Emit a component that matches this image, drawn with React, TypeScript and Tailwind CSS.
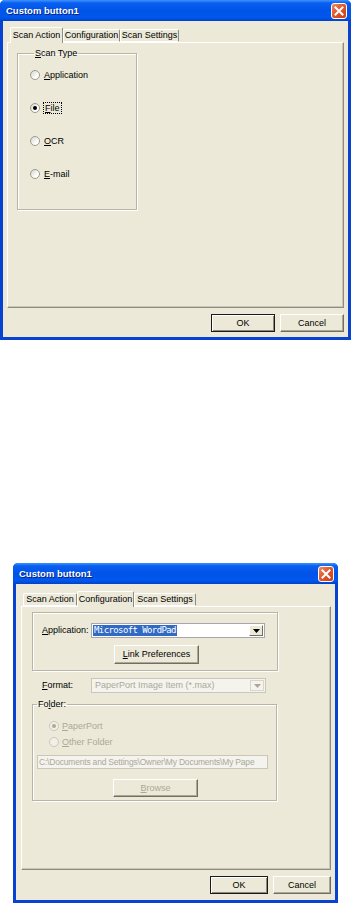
import React from 'react';

// underlined accelerator letter
const K = ({ children }: { children: React.ReactNode }) => <span className="underline underline-offset-[1px]">{children}</span>;

const CloseBox = () => (
  <div className="w-[16px] h-[16px] rounded-[3px] border border-white bg-[linear-gradient(135deg,#ee8a64_0%,#e2582c_45%,#c9411a_100%)] flex items-center justify-center">
    <svg width="10" height="10" viewBox="0 0 10 10">
      <path d="M1.5 1.5 L8.5 8.5 M8.5 1.5 L1.5 8.5" stroke="#fff" strokeWidth="2" strokeLinecap="square" />
    </svg>
  </div>
);

const TitleBar = ({ title }: { title: string }) => (
  <div className="h-[21px] shrink-0 flex items-center justify-between pl-[6px] pr-[4px] bg-[linear-gradient(180deg,#3d95ff_0%,#0a5ff0_14%,#0053e6_50%,#0058ee_82%,#0042c8_100%)]">
    <span className="text-white font-bold text-[9.5px] leading-none [text-shadow:1px_1px_0_#0a1f80]">{title}</span>
    <CloseBox />
  </div>
);

const Tab = ({ label, w, active }: { label: string; w: string; active?: boolean }) => (
  <div
    className={`${w} flex items-center justify-center rounded-t-[2px] border-t border-l border-r border-t-white border-l-white border-r-[#8e8c80] bg-[#ece9d8] ${
      active ? 'h-[16px] relative z-10 -mb-px' : 'h-[13px] border-b border-b-white'
    }`}
  >
    {label}
  </div>
);

const Radio = ({ checked, disabled }: { checked?: boolean; disabled?: boolean }) => (
  <span
    className={`w-[10px] h-[10px] rounded-full border flex items-center justify-center shrink-0 ${
      disabled ? 'border-[#cac8bb] bg-[#f2f0e6]' : 'border-[#9c9a90] bg-[linear-gradient(135deg,#d6d4ca_0%,#ffffff_70%)]'
    }`}
  >
    {checked && <span className={`w-[4px] h-[4px] rounded-full ${disabled ? 'bg-[#aca899]' : 'bg-black'}`} />}
  </span>
);

const Btn = ({ children, w, h, def, disabled }: { children: React.ReactNode; w: string; h: string; def?: boolean; disabled?: boolean }) => (
  <div
    className={`${w} ${h} flex items-center justify-center bg-[#ece9d8] ${
      def
        ? 'border border-[#1a1a1a] shadow-[inset_1px_1px_0_#fff,inset_-1px_-1px_0_#8a887c]'
        : 'border border-t-white border-l-white border-r-[#716f64] border-b-[#716f64] shadow-[inset_-1px_-1px_0_#aca899]'
    } ${disabled ? 'text-[#aca899]' : 'text-black'}`}
  >
    {children}
  </div>
);

const Window = ({ title, w, children }: { title: string; w: string; children: React.ReactNode }) => (
  <div className={`${w} h-[340px] flex flex-col rounded-t-[5px] overflow-hidden bg-[#0842d2]`}>
    <TitleBar title={title} />
    <div className="flex-1 mx-[3px] mb-[3px] bg-[#ece9d8] flex flex-col">{children}</div>
  </div>
);

const panelCls =
  'flex flex-col border border-t-white border-l-white border-r-[#8e8c80] border-b-[#8e8c80] shadow-[inset_-1px_-1px_0_#c9c6b6]';

const groupCls = 'border border-[#b8b5a6] shadow-[1px_1px_0_#fff,inset_1px_1px_0_#fff]';

const Arrow = ({ color }: { color: string }) => (
  <svg width="7" height="4" viewBox="0 0 7 4">
    <path d="M0 0h7L3.5 4z" fill={color} />
  </svg>
);

const Footer = ({ bw }: { bw: string }) => (
  <div className="flex justify-end gap-[5px] mt-[6px]">
    <Btn w={bw} h="h-[18px]" def>OK</Btn>
    <Btn w={bw} h="h-[18px]">Cancel</Btn>
  </div>
);

const ScanActionDialog = () => (
  <Window title="Custom button1" w="w-[351px]">
    <div className="flex-1 flex flex-col px-[4px] pt-[6px] pb-[5px]">
      <div className="flex items-end pl-[3px] h-[15px]">
        <Tab label="Scan Action" w="w-[53px]" active />
        <Tab label="Configuration" w="w-[57px]" />
        <Tab label="Scan Settings" w="w-[59px]" />
      </div>
      <div className={`${panelCls} h-[266px]`}>
        <fieldset className={`${groupCls} ml-[9px] mt-[5px] w-[120px] h-[162px] pl-[12px] pt-[10px] flex flex-col gap-[21px]`}>
          <legend className="ml-[4px] px-[1px] leading-[11px]">
            <K>S</K>can Type
          </legend>
          <div className="flex items-center gap-[4px] h-[12px]">
            <Radio />
            <span><K>A</K>pplication</span>
          </div>
          <div className="flex items-center gap-[3px] h-[12px]">
            <Radio checked />
            <span className="border border-dotted border-black px-px leading-[10px]"><K>F</K>ile</span>
          </div>
          <div className="flex items-center gap-[4px] h-[12px]">
            <Radio />
            <span><K>O</K>CR</span>
          </div>
          <div className="flex items-center gap-[4px] h-[12px]">
            <Radio />
            <span><K>E</K>-mail</span>
          </div>
        </fieldset>
      </div>
      <Footer bw="w-[64px]" />
    </div>
  </Window>
);

const ConfigurationDialog = () => (
  <Window title="Custom button1" w="w-[325px]">
    <div className="flex-1 flex flex-col pl-[5px] pr-[4px] pt-[8px] pb-[5px]">
      <div className="flex items-end pl-[2px] h-[14px]">
        <Tab label="Scan Action" w="w-[54px]" />
        <Tab label="Configuration" w="w-[57px]" active />
        <Tab label="Scan Settings" w="w-[62px]" />
      </div>
      <div className={`${panelCls} h-[264px]`}>
        {/* application box */}
        <div className={`${groupCls} ml-[10px] mt-[5px] w-[246px] h-[59px] pl-[9px] pt-[10px] flex flex-col`}>
          <div className="flex items-center h-[15px]">
            <span className="w-[49px]">
              <K>A</K>pplication:
            </span>
            <div className="w-[174px] h-[15px] bg-white border border-[#a7a6aa] flex items-center p-px">
              <span className="h-full flex-1 flex items-center">
                <span className="bg-[#316ac5] text-white h-full flex items-center px-px font-['DejaVu_Sans_Mono',monospace] text-[9px] tracking-[-0.6px]">
                  Microsoft WordPad
                </span>
              </span>
              <span className="w-[14px] h-full bg-[#ece9d8] border border-t-white border-l-white border-r-[#716f64] border-b-[#716f64] flex items-center justify-center">
                <Arrow color="#000" />
              </span>
            </div>
          </div>
          <div className="mt-[7px] ml-[72px]">
            <Btn w="w-[85px]" h="h-[19px]"><span><K>L</K>ink Preferences</span></Btn>
          </div>
        </div>

        {/* format */}
        <div className="flex items-center ml-[20px] mt-[7px] h-[15px]">
          <span className="w-[49px]">
            <K>F</K>ormat:
          </span>
          <div className="w-[175px] h-[15px] bg-[#f4f3ee] border border-[#c9c7ba] flex items-center p-px text-[#aca899]">
            <span className="flex-1 pl-[2px] whitespace-nowrap">PaperPort Image Item (*.max)</span>
            <span className="w-[14px] h-full bg-[#f4f3ee] border border-[#d8d6c8] flex items-center justify-center">
              <Arrow color="#aca899" />
            </span>
          </div>
        </div>

        {/* folder */}
        <fieldset className={`${groupCls} ml-[10px] mt-[6px] w-[245px] h-[102px] flex flex-col`}>
          <legend className="ml-[4px] px-[1px] leading-[11px]">
            Fo<K>l</K>der:
          </legend>
          <div className="flex items-center gap-[3px] h-[12px] ml-[16px] mt-[10px] text-[#aca899]">
            <Radio checked disabled />
            <span><K>P</K>aperPort</span>
          </div>
          <div className="flex items-center gap-[3px] h-[12px] ml-[16px] mt-[4px] text-[#aca899]">
            <Radio disabled />
            <span><K>O</K>ther Folder</span>
          </div>
          <div className="ml-[4px] mt-[7px] w-[231px] h-[14px] bg-[#f4f3ee] border border-[#c9c7ba] text-[#aca899] flex items-center pl-[1px] whitespace-nowrap text-[8.5px] tracking-[-0.2px]">
            C:\Documents and Settings\Owner\My Documents\My Pape
          </div>
          <div className="ml-[80px] mt-[10px]">
            <Btn w="w-[85px]" h="h-[18px]" disabled><span><K>B</K>rowse</span></Btn>
          </div>
        </fieldset>
      </div>
      <Footer bw="w-[58px]" />
    </div>
  </Window>
);

export default function App() {
  return (
    <div className="w-[351px] h-[903px] bg-white font-['Liberation_Sans',Arial,sans-serif] text-[9px] leading-[11px] text-black">
      <ScanActionDialog />
      <div className="h-[223px]" />
      <div className="ml-[13px]">
        <ConfigurationDialog />
      </div>
    </div>
  );
}
